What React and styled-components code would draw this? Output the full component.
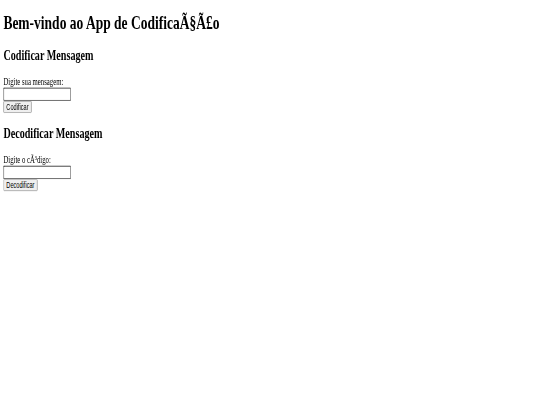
import React from 'react';
import styled, { createGlobalStyle } from 'styled-components';

const GlobalStyle = createGlobalStyle`
  html, body {
    margin: 0;
    padding: 0;
    background: #FFFFFF;
    overflow: hidden;
  }
`;

const Frame = styled.div`
  width: 540px;
  height: 405px;
  overflow: hidden;
`;

// The reference is a plain default page squeezed unevenly into 540x405
const Viewport = styled.div`
  width: 1280px;
  height: 653px;
  box-sizing: border-box;
  padding: 0 8px;
  overflow: hidden;
  transform: scale(0.421875, 0.62);
  transform-origin: 0 0;
  font-family: "Liberation Serif", "Times New Roman", serif;
  font-size: 16px;
  color: #000000;
`;

const Title = styled.h1`
  font-size: 32px;
  font-weight: bold;
  margin: 18px 0 21.44px;
`;

const SectionTitle = styled.h2`
  font-size: 24px;
  font-weight: bold;
  margin: 19.92px 0;
`;

const Field = styled.input`
  font-family: "Liberation Sans", Arial, sans-serif;
  font-size: 13.33px;
  width: 152px;
  padding: 1.5px 2px;
  border: 2px inset #767676;
  border-radius: 2px;
  background: #FFFFFF;
`;

const Button = styled.button`
  font-family: "Liberation Sans", Arial, sans-serif;
  font-size: 13.33px;
  padding: 1px 6px;
  border: 1px solid #767676;
  border-radius: 2px;
  background: #EFEFEF;
  color: #000000;
`;

const App = () => {
  return (
    <>
      <GlobalStyle />
      <Frame>
        <Viewport>
          <Title>Bem-vindo ao App de CodificaÃ§Ã£o</Title>
          <section>
            <SectionTitle>Codificar Mensagem</SectionTitle>
            <label htmlFor="msg">Digite sua mensagem:</label>
            <br />
            <Field id="msg" type="text" />
            <br />
            <Button>Codificar</Button>
          </section>
          <section>
            <SectionTitle>Decodificar Mensagem</SectionTitle>
            <label htmlFor="code">Digite o cÃ³digo:</label>
            <br />
            <Field id="code" type="text" />
            <br />
            <Button>Decodificar</Button>
          </section>
        </Viewport>
      </Frame>
    </>
  );
};

export default App;
